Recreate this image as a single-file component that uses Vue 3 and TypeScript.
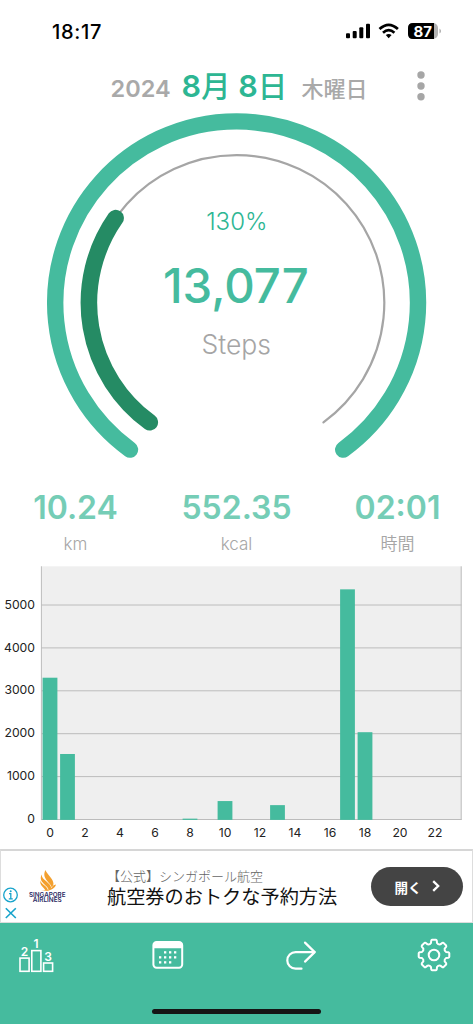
<script setup lang="ts">
interface Stat {
  value: string
  unit: string
}

const stats: Stat[] = [
  { value: '10.24', unit: 'km' },
  { value: '552.35', unit: 'kcal' },
  { value: '02:01', unit: '時間' },
]

// Gauge geometry
const cx = 236.6
const cy = 302.8 - 106
function arc(r: number, from: number, to: number): string {
  const p = (deg: number) => {
    const a = (deg * Math.PI) / 180
    return `${(cx + r * Math.sin(a)).toFixed(2)} ${(cy - r * Math.cos(a)).toFixed(2)}`
  }
  return `M${p(from)} A${r} ${r} 0 ${to - from > 180 ? 1 : 0} 1 ${p(to)}`
}
const outerArc = arc(181.4, -144, 144)
const trackArc = arc(147.7, -144, 144)
const goalArc = arc(147.7, -144, -55)

// Hourly chart
const chartTop = 566
const baseY = 819.5 - chartTop
const perThousand = 42.9
const ticks = [0, 1000, 2000, 3000, 4000, 5000]
const hours = [0, 2, 4, 6, 8, 10, 12, 14, 16, 18, 20, 22]
const bars = [
  { hour: 0, steps: 3305 },
  { hour: 1, steps: 1527 },
  { hour: 8, steps: 20 },
  { hour: 10, steps: 430 },
  { hour: 13, steps: 335 },
  { hour: 17, steps: 5365 },
  { hour: 18, steps: 2035 },
]
const tickY = (v: number) => baseY - (v / 1000) * perThousand
const hourX = (h: number) => 50 + h * 17.5

// Settings gear outline, eight teeth
function gear(): string {
  const pt = (r: number, deg: number) => {
    const a = (deg * Math.PI) / 180
    return `${(17 + r * Math.sin(a)).toFixed(2)} ${(17 - r * Math.cos(a)).toFixed(2)}`
  }
  let d = ''
  for (let i = 0; i < 8; i++) {
    const t = i * 45
    d += `${i ? 'L' : 'M'}${pt(12.4, t - 14)} L${pt(14.6, t - 11)} Q${pt(15.4, t - 9.5)} ${pt(15.4, t - 7)} L${pt(15.4, t + 7)} Q${pt(15.4, t + 9.5)} ${pt(14.6, t + 11)} L${pt(12.4, t + 14)} Q${pt(11, t + 22.5)} ${pt(12.4, t + 31)} `
  }
  return d + 'Z'
}
const gearPath = gear()

const calendarDots = [
  [13, 12], [18, 12], [23, 12],
  [8, 17], [13, 17], [18, 17], [23, 17],
  [8, 22], [13, 22], [18, 22],
]
</script>

<template>
  <main class="screen">
    <header class="status">
      <span class="clock">18:17</span>
      <svg class="indicators" width="100" height="20" viewBox="0 0 100 20">
        <rect x="1" y="11.3" width="4" height="5" rx="1" />
        <rect x="7.7" y="9" width="4" height="7.3" rx="1" />
        <rect x="14.3" y="5.3" width="4" height="11" rx="1" />
        <rect x="21" y="1.8" width="4" height="14.5" rx="1" />
        <g fill="none" stroke="#000" stroke-width="2.7">
          <path d="M34.5 7.1 Q43.7 -1.3 52.9 7.1" />
          <path d="M38 10.7 Q43.7 5.5 49.4 10.7" />
        </g>
        <path d="M40.8 13.1 Q43.7 10.8 46.6 13.1 L43.7 16.2Z" />
        <rect x="63" y="1" width="30" height="16" rx="5" fill="#b3b3b3" />
        <path d="M68 1H89V17H68Q63 17 63 12V6Q63 1 68 1Z" />
        <path d="M94.5 6.5Q96 7.5 96 9T94.5 11.5Z" fill="#aaa" />
        <text x="77.8" y="14.6" text-anchor="middle" class="battery">87</text>
      </svg>
    </header>

    <section class="date-row">
      <span class="year">2024</span>
      <span class="day">8<span class="kanji">月</span>&nbsp;8<span class="kanji">日</span></span>
      <span class="weekday">木曜日</span>
      <svg class="more" width="8" height="32" viewBox="0 0 8 32">
        <circle cx="4" cy="5" r="3.7" />
        <circle cx="4" cy="16" r="3.7" />
        <circle cx="4" cy="26.7" r="3.7" />
      </svg>
    </section>

    <svg class="gauge" width="473" height="374" viewBox="0 0 473 374">
      <path class="outer" :d="outerArc" />
      <path class="track" :d="trackArc" />
      <path class="goal" :d="goalArc" />
      <text class="percent" x="236.8" y="124">130%</text>
      <text class="total" x="235.9" y="197">13,077</text>
      <text class="caption" x="236.3" y="247.7">Steps</text>
    </svg>

    <section class="stats">
      <div v-for="s in stats" :key="s.unit" class="stat">
        <strong>{{ s.value }}</strong>
        <span>{{ s.unit }}</span>
      </div>
    </section>

    <svg class="chart" width="473" height="283" viewBox="0 0 473 283">
      <rect x="41" y="0.3" width="420.5" height="253.7" fill="#efefef" />
      <g v-for="t in ticks" :key="t">
        <line x1="41" x2="461.5" :y1="tickY(t)" :y2="tickY(t)" />
        <text x="35" :y="tickY(t) + 3.6" text-anchor="end">{{ t }}</text>
      </g>
      <line x1="41.4" x2="41.4" y1="0.3" y2="254" />
      <line x1="461.2" x2="461.2" y1="0.3" y2="254" />
      <rect
        v-for="b in bars"
        :key="b.hour"
        class="bar"
        :x="hourX(b.hour) - 7.4"
        :y="tickY(b.steps)"
        width="14.8"
        :height="baseY - tickY(b.steps) + 0.4"
      />
      <text v-for="h in hours" :key="h" :x="hourX(h)" y="270.6" text-anchor="middle">{{ h }}</text>
    </svg>

    <aside class="ad">
      <svg class="ad-marks" width="18" height="34" viewBox="0 0 18 34">
        <g fill="none" stroke="#17a3cb" stroke-width="1.3">
          <circle cx="9.5" cy="9" r="6.8" />
          <path d="M8 7.6H9.8V12.6M7.8 12.8H11.8" />
          <path d="M4.8 22.2L14.8 32M14.8 22.2L4.8 32" stroke-width="1.6" />
        </g>
        <circle cx="9.7" cy="5.2" r="1" fill="#17a3cb" />
      </svg>
      <svg class="logo" width="40" height="36" viewBox="0 0 40 36">
        <g fill="#f3a02f">
          <path d="M17.5 0 C18.5 4 25.5 8.5 25.5 14 L24 18 C22.5 12 13 8.5 17.5 0Z" />
          <path d="M13.8 4.5 C13 10 23.3 12.5 23.3 18.6 L20.8 20 C19.8 15 9.5 12 13.8 4.5Z" />
          <path d="M12.4 10.5 C13 14.5 19.5 16 19.8 20 L17.2 20 C15.7 17 11.5 15.5 12.4 10.5Z" />
          <path d="M13 20.9 C20 20.5 23.5 19 25.5 15.3 L28 14.4 C27 18.7 21 21.7 13 20.9Z" />
        </g>
        <text x="1" y="26.6" textLength="36.5" lengthAdjust="spacingAndGlyphs">SINGAPORE</text>
        <text x="4.8" y="31.8" textLength="29" lengthAdjust="spacingAndGlyphs">AIRLINES</text>
      </svg>
      <div class="ad-copy">
        <span class="sponsor">【公式】シンガポール航空</span>
        <span class="headline">航空券のおトクな予約方法</span>
      </div>
      <button class="open">
        開く
        <svg width="8" height="12" viewBox="0 0 8 12">
          <path d="M1.2 1.1L6.2 6L1.2 10.9" fill="none" stroke="#fff" stroke-width="2.3" />
        </svg>
      </button>
    </aside>

    <nav class="tabs">
      <div class="icons">
        <svg class="podium" width="36" height="38" viewBox="0 0 36 38">
          <g fill="none" stroke="#fff" stroke-width="1.6">
            <rect x="2" y="22.1" width="9.1" height="13.2" />
            <rect x="13.8" y="14.6" width="9.1" height="20.7" />
            <rect x="25.6" y="27" width="9" height="8.3" />
          </g>
          <text x="6.5" y="19.8" class="rank">2</text>
          <text x="18" y="12" class="rank">1</text>
          <text x="30" y="24.6" class="rank">3</text>
        </svg>
        <svg class="calendar" width="32" height="30" viewBox="0 0 32 30">
          <rect x="1.4" y="2" width="28.8" height="25.8" rx="3.2" fill="none" stroke="#fff" stroke-width="2" />
          <path d="M1.4 8.3V5Q1.4 2 4.6 2H27Q30.2 2 30.2 5V8.3Z" fill="#fff" />
          <rect v-for="(d, i) in calendarDots" :key="i" :x="d[0] - 1" :y="d[1] - 0.8" width="2.3" height="2.3" fill="#fff" />
        </svg>
        <svg class="share" width="32" height="32" viewBox="0 0 32 32">
          <g fill="none" stroke="#fff" stroke-width="2.2" stroke-linecap="round" stroke-linejoin="round">
            <path d="M29.5 13.1H10.6A8.2 8.2 0 0 0 10.6 29.7H16.5" />
            <path d="M20 3.6L29.7 13.1L20 22.6" />
          </g>
        </svg>
        <svg width="34" height="34" viewBox="0 0 34 34">
          <g fill="none" stroke="#fff" stroke-width="2" stroke-linejoin="round">
            <path :d="gearPath" />
            <circle cx="17" cy="17" r="5.3" />
          </g>
        </svg>
      </div>
      <div class="home-bar"></div>
    </nav>
  </main>
</template>

<style>
body {
  margin: 0;
  background: #fff;
}
</style>

<style scoped>
.screen {
  width: 473px;
  height: 1024px;
  overflow: hidden;
  display: flex;
  flex-direction: column;
  background: #fff;
  font-family: Inter, 'Noto Sans CJK JP', sans-serif;
}
.status {
  height: 62px;
  flex: none;
  display: flex;
  justify-content: space-between;
  padding: 0 28px 0 52px;
  box-sizing: border-box;
}
.clock {
  margin-top: 20px;
  line-height: 24px;
  font-size: 20px;
  font-weight: 550;
  letter-spacing: 0.7px;
}
.indicators {
  margin-top: 22px;
}
.battery {
  font-size: 15px;
  font-weight: 700;
  fill: #fff;
}
.date-row {
  height: 44px;
  flex: none;
  display: flex;
  align-items: baseline;
  padding-left: 110.5px;
  line-height: 47px;
  white-space: nowrap;
  color: #a9a9a9;
  font-weight: 600;
}
.year {
  width: 71px;
  font-size: 23.5px;
}
.day {
  width: 120px;
  font-size: 30.5px;
  color: #2db693;
}
.kanji {
  font-size: 29.5px;
  font-weight: 500;
}
.weekday {
  width: 115.5px;
  font-size: 22px;
  font-weight: 500;
}
.more {
  align-self: flex-start;
  margin-top: 8px;
  fill: #a6a6a6;
}
.gauge,
.chart {
  display: block;
  flex: none;
}
.gauge path {
  fill: none;
  stroke-linecap: round;
}
.gauge .outer {
  stroke: #45bb9e;
  stroke-width: 16.4;
}
.gauge .track {
  stroke: #a5a5a5;
  stroke-width: 2.2;
}
.gauge .goal {
  stroke: #258b64;
  stroke-width: 16.6;
}
.gauge text {
  text-anchor: middle;
}
.percent {
  font-size: 24px;
  font-weight: 300;
  fill: #2db693;
}
.total {
  font-size: 47.3px;
  font-weight: 550;
  fill: #45bb9e;
}
.caption {
  font-size: 26.5px;
  font-weight: 350;
  fill: #a5a5a5;
}
.stats {
  height: 86px;
  flex: none;
  display: grid;
  grid-template-columns: repeat(3, 161px);
  justify-content: center;
  padding-top: 8px;
  box-sizing: border-box;
}
.stat {
  display: flex;
  flex-direction: column;
  align-items: center;
  color: #a6a6a6;
}
.stat strong {
  font-size: 32px;
  line-height: 40px;
  font-weight: 560;
  color: #75cdb6;
}
.stat span {
  font-size: 17px;
  line-height: 24px;
  margin-top: 4px;
  font-weight: 350;
}
.chart line {
  stroke: #bcbcbc;
  stroke-width: 1;
}
.chart text {
  font-size: 12.2px;
  fill: #222;
}
.bar {
  fill: #45bb9e;
}
.ad {
  height: 74px;
  flex: none;
  display: flex;
  box-sizing: border-box;
  border: 1px solid #ddd;
  border-top: 2px solid #d6d6d6;
  background: #fff;
}
.ad-marks {
  margin-top: 35px;
}
.logo {
  margin: 19px 0 0 9px;
}
.logo text {
  font-size: 5.9px;
  font-weight: 600;
  fill: #2b2a63;
}
.ad-copy {
  width: 263px;
  margin: 15px 0 0 39px;
  display: flex;
  flex-direction: column;
  white-space: nowrap;
  font-family: 'Noto Sans CJK JP', sans-serif;
}
.sponsor {
  font-size: 13px;
  line-height: 19px;
  font-weight: 300;
  color: #666;
}
.headline {
  font-size: 19.2px;
  line-height: 22px;
  color: #111;
}
.open {
  width: 92px;
  height: 39px;
  margin: 16px 0 0 1px;
  padding: 0;
  border: 0;
  border-radius: 20px;
  display: flex;
  align-items: center;
  justify-content: center;
  gap: 10px;
  background: #444;
  color: #fff;
  font: 700 13.5px 'Noto Sans CJK JP', sans-serif;
}
.open svg {
  margin-top: -2px;
}
.tabs {
  height: 101px;
  flex: none;
  display: flex;
  flex-direction: column;
  background: #45bb9e;
}
.icons {
  height: 64px;
  padding-left: 18px;
  display: flex;
  align-items: center;
}
.podium {
  margin-right: 97.5px;
}
.calendar {
  margin-right: 101.6px;
}
.share {
  margin-right: 100.3px;
}
.rank {
  font-size: 12px;
  font-weight: 600;
  fill: #fff;
  text-anchor: middle;
}
.home-bar {
  width: 169px;
  height: 5.5px;
  margin: 21.5px auto 0;
  border-radius: 3px;
  background: #151515;
}
</style>
